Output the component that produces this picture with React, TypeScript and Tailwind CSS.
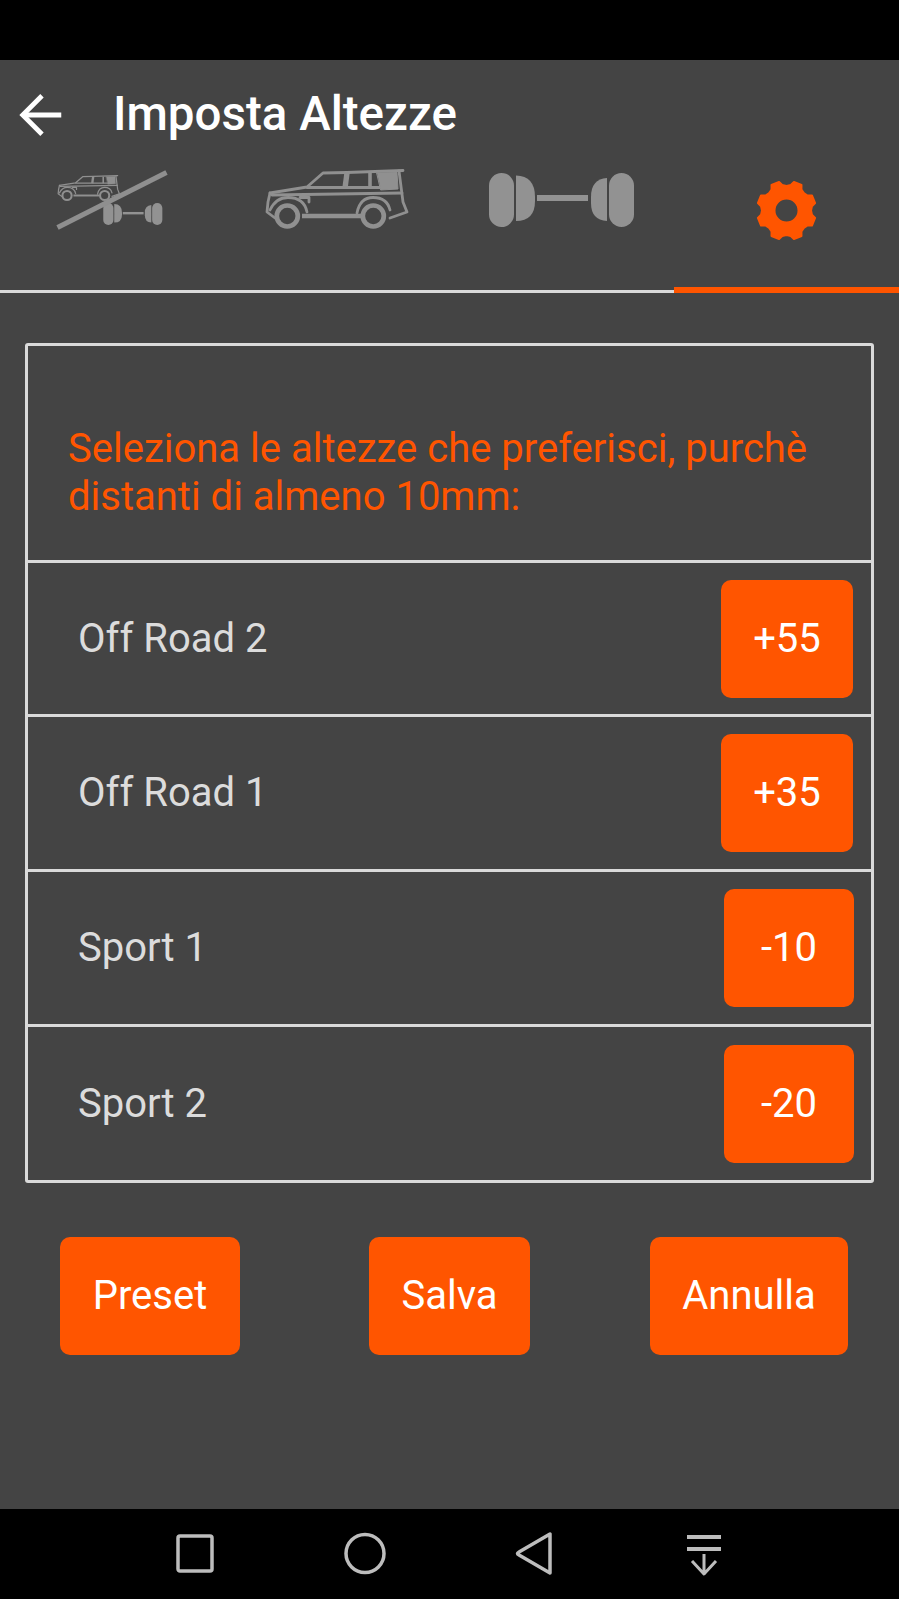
import { ArrowLeft } from "lucide-react";

const ORANGE = "bg-[#ff5500]";

function Car({ className }: { className: string }) {
  return (
    <svg viewBox="0 0 155 80" className={className} fill="none" stroke="#909090" strokeWidth="2.8" strokeLinejoin="round" strokeLinecap="round">
      {/* roof, hood and tail */}
      <path d="M10 33 L47 27 L63 13 L87 12.5 L143 10.5" />
      <path d="M139 11 L143 42 L147 52 L130 58" />
      <path d="M10 33 L8 42 L7 52 L15 58" />
      <path d="M12 35 L142 33" />
      {/* windows */}
      <path d="M47 27.5 H120" />
      <path strokeWidth="5.4" strokeLinecap="butt" d="M87 13 L85 28" />
      <path strokeWidth="3.6" strokeLinecap="butt" d="M110 13 V28" />
      <path fill="#909090" strokeWidth="1" d="M117 13 L137 12.5 L138 29 L121 30 Z" />
      <path d="M40 37.5 H49 V42" />
      {/* arches, sill and wheels */}
      <path d="M10 50 Q16 37.5 28 37.5 Q44 37.5 47 52" />
      <path d="M97 53 Q100 37.5 113 37.5 Q127 37.5 130 50" />
      <path strokeWidth="4.5" strokeLinecap="butt" d="M42 56 H102" />
      <circle cx="27.3" cy="56" r="10.5" strokeWidth="4.7" />
      <circle cx="113.3" cy="56" r="10.5" strokeWidth="4.7" />
    </svg>
  );
}

function Axle({ className }: { className: string }) {
  return (
    <svg viewBox="0 0 146 54" className={className} fill="#929292">
      <rect x="0" y="0" width="25" height="54" rx="12.5" />
      <path d="M27 2.5 Q46 3 46 24 V28 Q46 48 27 48 Z" />
      <rect x="48" y="22" width="51" height="6" />
      <path d="M118 5 Q102 6 102 24 V30 Q102 47 118 48 Z" />
      <rect x="120" y="0" width="25" height="54" rx="12.5" />
    </svg>
  );
}

function Gear() {
  const points: string[] = [];
  for (let i = 0; i < 8; i++) {
    const a = ((i * 45 + 22.5) * Math.PI) / 180;
    const at = (r: number, d: number) =>
      `${(50 + r * Math.cos(a + (d * Math.PI) / 180)).toFixed(2)} ${(50 + r * Math.sin(a + (d * Math.PI) / 180)).toFixed(2)}`;
    points.push(at(39, -22.5), at(41, -13), at(47, -8), at(47, 8), at(41, 13));
  }
  const body = `M${points.join(" L")} Z`;
  return (
    <svg viewBox="0 0 100 100" className="h-[63px] w-[63px]">
      <path d={`${body} M69 50 A19 19 0 1 0 31 50 A19 19 0 1 0 69 50 Z`} fill="#ff5500" fillRule="evenodd" stroke="#ff5500" strokeWidth="3" strokeLinejoin="round" />
    </svg>
  );
}

function Row({ label, value, wide, height, last }: { label: string; value: string; wide: boolean; height: string; last?: boolean }) {
  return (
    <div className={`flex items-center justify-between pl-[50px] ${height} ${wide ? "pr-[18px]" : "pr-[17px]"} ${last ? "" : "border-b-[3px] border-[#dadada]"}`}>
      <span className="text-[40px] text-[#dcdcdc]">{label}</span>
      <div className={`${ORANGE} flex h-[118px] items-center justify-center rounded-[10px] text-[40px] text-white ${wide ? "w-[132px]" : "w-[130px]"}`}>
        {value}
      </div>
    </div>
  );
}

function ActionButton({ label, width }: { label: string; width: string }) {
  return (
    <div className={`${ORANGE} flex h-[118px] items-center justify-center rounded-[10px] text-[40px] text-white ${width}`}>
      {label}
    </div>
  );
}

export default function App() {
  return (
    <div className="flex h-[1599px] w-[899px] flex-col overflow-hidden bg-[#444444] font-['Roboto',sans-serif]">
      <div className="h-[60px] shrink-0 bg-black" />

      <header className="flex h-[96px] shrink-0 items-center pl-[9px] pt-[14px]">
        <ArrowLeft className="h-[66px] w-[66px] text-white" strokeWidth={1.75} strokeLinecap="butt" strokeLinejoin="miter" />
        <h1 className="ml-[38px] text-[47.5px] font-medium text-white">Imposta Altezze</h1>
      </header>

      {/* tabs */}
      <div className="relative grid h-[137px] shrink-0 grid-cols-4 border-b-[3px] border-[#dadada]">
        <div className="flex justify-center pt-[14px]">
          <div className="relative h-[60px] w-[112px]">
            <Car className="absolute left-[-1px] top-[1px] h-[35px] w-[68px]" />
            <Axle className="absolute left-[47px] top-[33px] h-[22px] w-[60px]" />
            <svg viewBox="0 0 112 60" className="absolute inset-0 h-full w-full">
              <path d="M1.5 57.5 L110.5 2.5" stroke="#8f8f8f" strokeWidth="5" />
            </svg>
          </div>
        </div>
        <div className="flex justify-center pt-[4px]">
          <Car className="h-[80px] w-[155px]" />
        </div>
        <div className="flex justify-center pt-[17px]">
          <Axle className="h-[54px] w-[146px]" />
        </div>
        <div className="flex justify-center pt-[23px]">
          <Gear />
        </div>
        <div className={`${ORANGE} absolute bottom-[-3px] right-0 h-[6px] w-[225px]`} />
      </div>

      {/* settings card */}
      <main className="ml-[25px] mt-[50px] w-[849px] shrink-0 rounded-[3px] border-[3px] border-[#dadada]">
        <div className="h-[217px] border-b-[3px] border-[#dadada] pl-[40px] pt-[79px] text-[40px] leading-[48px] text-[#ff5500]">
          Seleziona le altezze che preferisci, purchè
          <br />
          distanti di almeno 10mm:
        </div>
        <Row label="Off Road 2" value="+55" wide height="h-[154px]" />
        <Row label="Off Road 1" value="+35" wide height="h-[155px]" />
        <Row label="Sport 1" value="-10" wide={false} height="h-[155px]" />
        <Row label="Sport 2" value="-20" wide={false} height="h-[153px]" last />
      </main>

      <div className="ml-[60px] mt-[54px] flex shrink-0">
        <ActionButton label="Preset" width="w-[180px]" />
        <div className="ml-[129px]">
          <ActionButton label="Salva" width="w-[161px]" />
        </div>
        <div className="ml-[120px]">
          <ActionButton label="Annulla" width="w-[198px]" />
        </div>
      </div>

      <div className="flex-1" />

      {/* android nav bar */}
      <nav className="flex h-[90px] shrink-0 items-center bg-black pl-[176px]">
        <svg width="560" height="50" viewBox="0 0 560 50" fill="none" stroke="#bdbdbd" strokeWidth="3.5" strokeLinejoin="round">
          <rect x="2" y="7" width="34" height="35" rx="2" />
          <circle cx="189" cy="24.5" r="19" />
          <path d="M374 5 V44 L343 26 Q340 24.5 343 23 Z" />
          <path d="M511 8 H545 M511 20 H545" strokeWidth="4" />
          <path d="M528 25 V44 M516 32 L528 45 L540 32" strokeWidth="3" />
        </svg>
      </nav>
    </div>
  );
}
